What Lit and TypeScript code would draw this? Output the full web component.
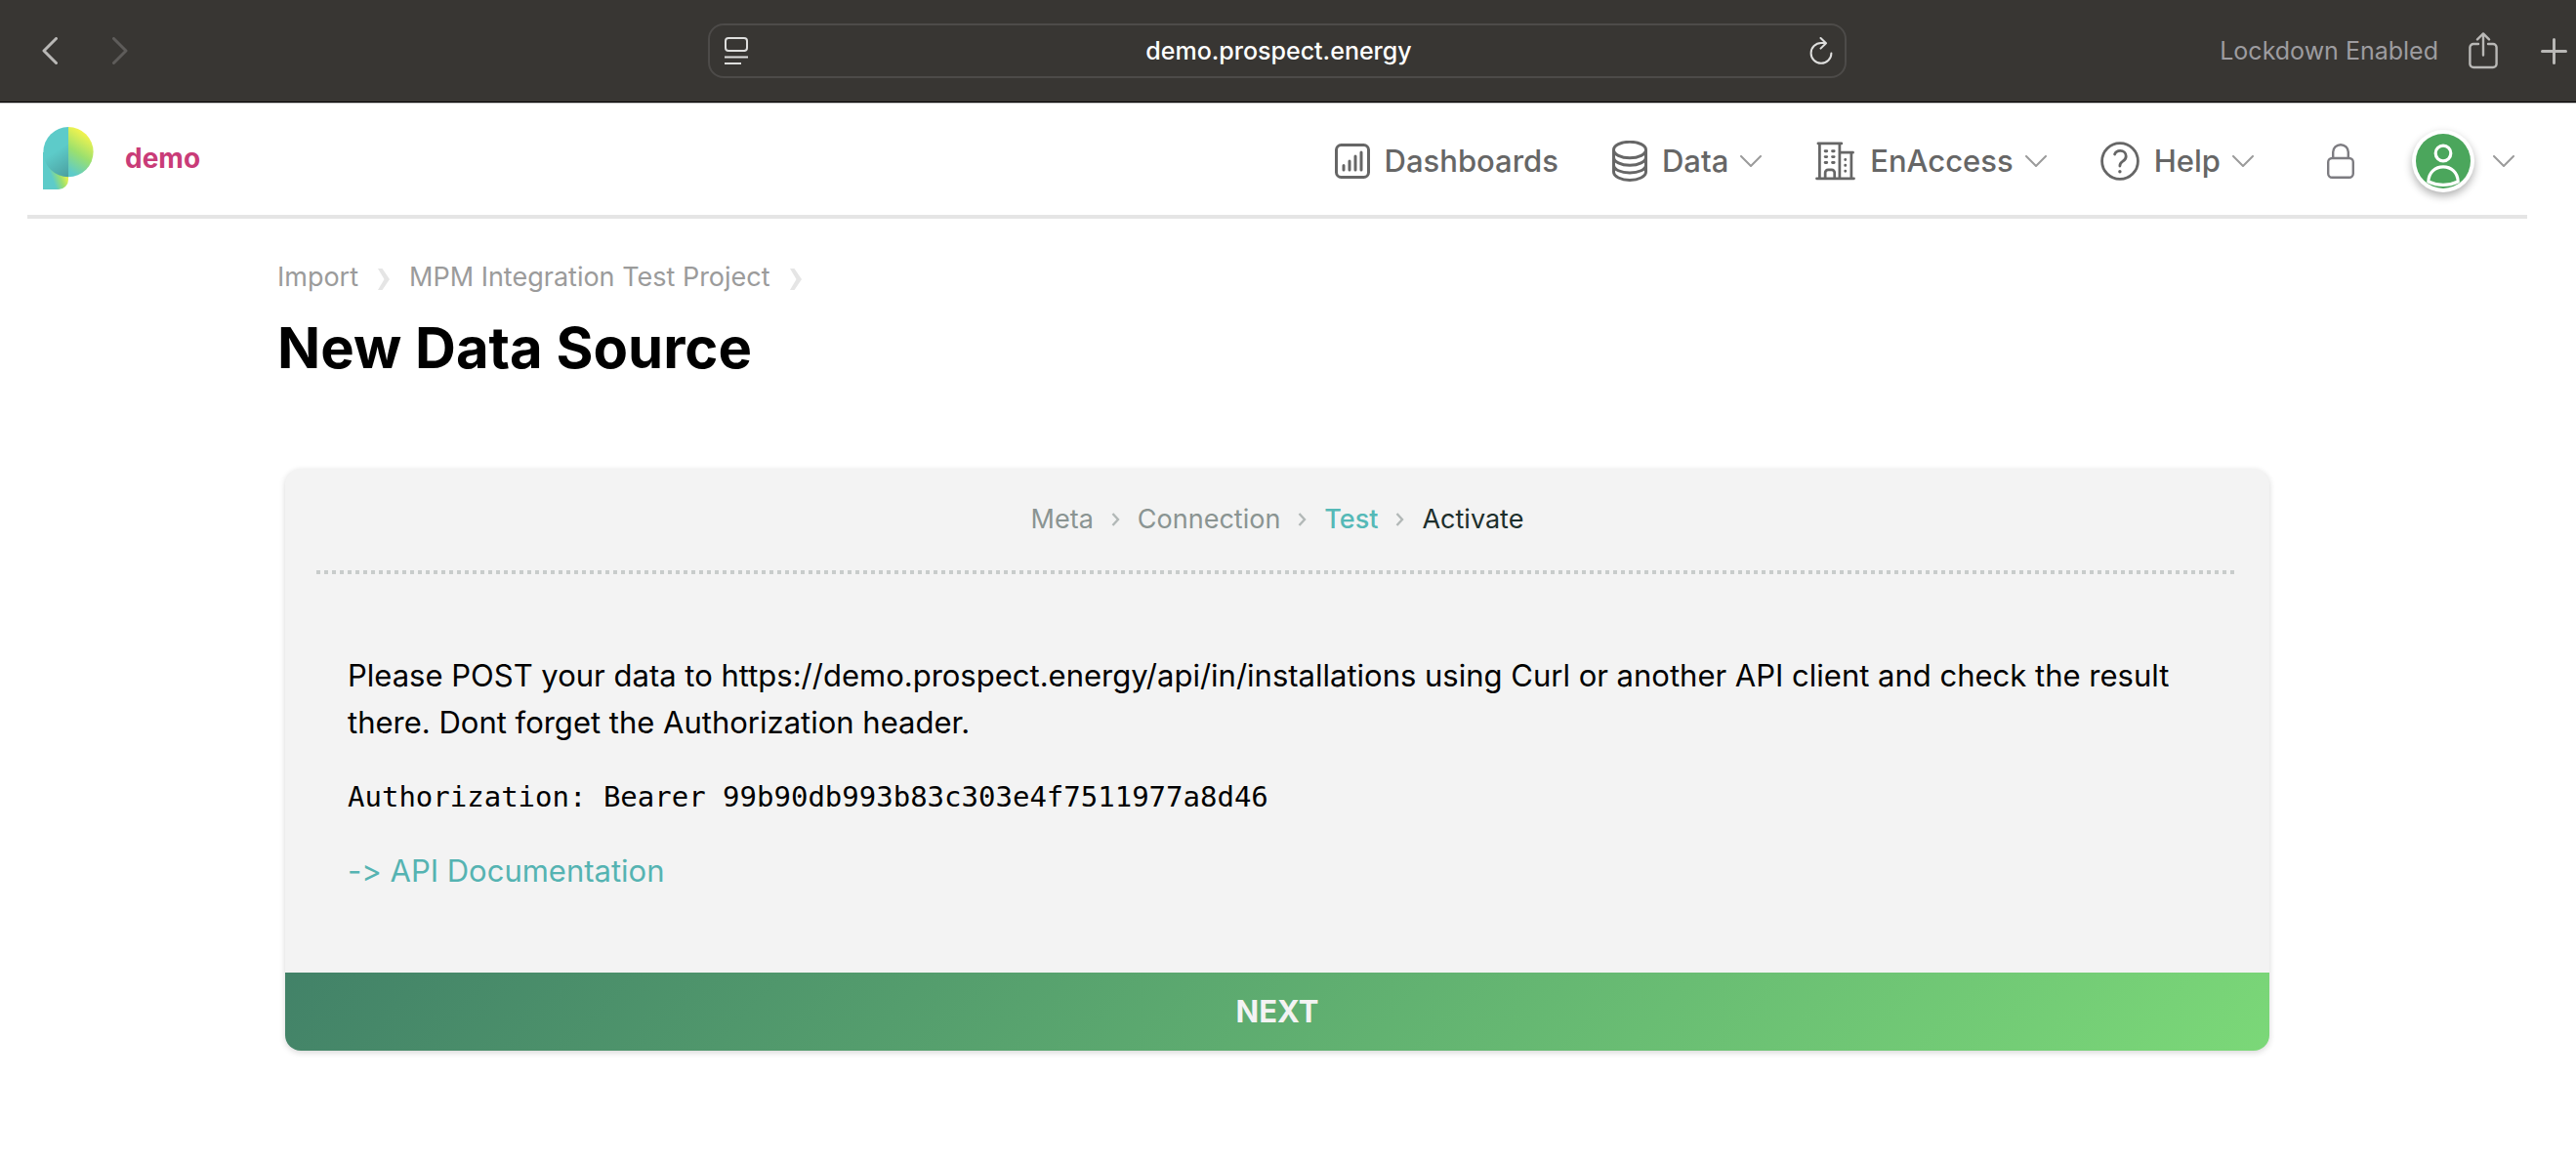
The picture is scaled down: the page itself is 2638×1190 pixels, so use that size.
import { LitElement, html, css, svg } from "lit";
import { customElement, property } from "lit/decorators.js";

const chevron = html`<svg class="chevron" width="22" height="12" viewBox="0 0 22 12" aria-hidden="true">
  <path d="M1 1 11 11 21 1" fill="none" stroke="#9b9b9b" stroke-width="2" stroke-linejoin="round" stroke-linecap="round" />
</svg>`;

const glyphs: Record<string, unknown> = {
  dashboards: html`<svg width="36" height="36" viewBox="0 0 36 36" fill="none" stroke="#666" stroke-width="3" stroke-linecap="round" aria-hidden="true">
    ${svg`<rect x="1.5" y="1.5" width="33" height="33" rx="5" />
    <path d="M9 22.5V27M15 18V27M21 13V27M27 9V27" />`}
  </svg>`,
  data: html`<svg width="36" height="42" viewBox="0 0 36 42" fill="none" stroke="#666" stroke-width="3" aria-hidden="true">
    ${svg`<ellipse cx="18" cy="9.5" rx="16.5" ry="8.2" />
    <path d="M1.5 9.5V32C1.5 36.7 9 40.5 18 40.5S34.5 36.7 34.5 32V9.5" />
    <path d="M1.5 17C1.5 21.7 9 25.3 18 25.3S34.5 21.7 34.5 17" />
    <path d="M1.5 25C1.5 29.7 9 33 18 33S34.5 29.7 34.5 25" />`}
  </svg>`,
  building: html`<svg width="41" height="40" viewBox="0 0 42 40" fill="none" stroke="#666" stroke-width="2.8" stroke-linecap="round" aria-hidden="true">
    ${svg`<path d="M3 1.5H27.5M4.5 1.5V38M25.5 1.5V38M1.5 38.2H40.5M25.5 11H39.5M37.8 11V38" />
    <path d="M10.4 38V32A3 3 0 0 1 13.4 29H17.2A3 3 0 0 1 20.2 32V38" />
    <path d="M10.4 9.5H12M18 9.5H19.6M10.4 15.5H12M18 15.5H19.6M10.4 21.5H12M18 21.5H19.6M31.5 18.4V18.5M31.5 24.4V24.5M31.5 30.4V30.5" stroke-width="3" />`}
  </svg>`,
  help: html`<svg width="40" height="40" viewBox="0 0 40 40" fill="none" stroke="#666" stroke-width="2.8" stroke-linecap="round" aria-hidden="true">
    ${svg`<circle cx="20" cy="20" r="18.4" />
    <path d="M14.6 13C15.5 10.6 17.6 9.4 20.2 9.4C23.7 9.4 26.2 11.8 26.2 15C26.2 17.8 24.6 19.2 22.6 20.4C20.6 21.7 19.9 22.8 19.9 25" />
    <path d="M19.9 30.7V30.8" stroke-width="3.4" />`}
  </svg>`,
};

@customElement("browser-toolbar")
export class BrowserToolbar extends LitElement {
  static styles = css`
    :host {
      display: grid;
      grid-template-columns: 725fr 1166fr 747fr;
      align-items: center;
      height: 104px;
      background: #383633;
      border-bottom: 1px solid #000;
      box-shadow: 0 1px 0 #bdbdbd;
      margin-bottom: 1px;
      font-family: Inter, "Liberation Sans", sans-serif;
      font-size: 25px;
      line-height: 32px;
    }
    button {
      display: block;
      background: none;
      border: 0;
      padding: 0;
      font: inherit;
      color: inherit;
    }
    svg {
      display: block;
    }
    .history {
      display: flex;
      gap: 56px;
      padding-left: 43px;
    }
    .address {
      display: flex;
      align-items: center;
      box-sizing: border-box;
      height: 56px;
      padding: 0 12px 0 15px;
      border: 2px solid #4d4b49;
      border-radius: 16px;
    }
    .url {
      flex: 1;
      min-width: 0;
      background: none;
      border: 0;
      padding: 0;
      font: inherit;
      font-weight: 500;
      color: #fff;
      text-align: center;
    }
    .actions {
      display: flex;
      align-items: center;
      justify-content: flex-end;
      padding-right: 9px;
    }
    .lockdown {
      color: #9d9ca0;
      margin-right: 31px;
    }
    .share {
      margin-right: 44px;
    }
  `;

  render() {
    return html`
      <div class="history">
        <button aria-label="Back">
          <svg width="16" height="28" viewBox="0 0 16 28" fill="none" stroke="#b9b8b6" stroke-width="3" stroke-linecap="round" stroke-linejoin="round">
            <path d="M14.5 1.5 2 14 14.5 26.5" />
          </svg>
        </button>
        <button aria-label="Forward" disabled>
          <svg width="16" height="28" viewBox="0 0 16 28" fill="none" stroke="#5e5c5a" stroke-width="3" stroke-linecap="round" stroke-linejoin="round">
            <path d="M1.5 1.5 14 14 1.5 26.5" />
          </svg>
        </button>
      </div>
      <div class="address">
        <button aria-label="Page menu">
          <svg width="24" height="28" viewBox="0 0 24 28" fill="none" stroke="#dededd" stroke-width="2">
            <rect x="1" y="1" width="22" height="13" rx="3" />
            <path d="M0 20.5H24M0 27H17" />
          </svg>
        </button>
        <input class="url" type="text" aria-label="Address" .value=${"demo.prospect.energy"} />
        <button aria-label="Reload">
          <svg width="24" height="28" viewBox="0 0 24 28" fill="none" stroke="#dededd" stroke-width="2" stroke-linecap="round" stroke-linejoin="round">
            <path d="M12 6A10.4 10.4 0 1 0 22.4 16.4M12 6H16.5M11.5 1 17 6.2 11.5 11.6" />
          </svg>
        </button>
      </div>
      <div class="actions">
        <span class="lockdown">Lockdown Enabled</span>
        <button class="share" aria-label="Share">
          <svg width="30" height="38" viewBox="0 0 30 38" fill="none" stroke="#b9b8b6" stroke-width="2.4" stroke-linecap="round" stroke-linejoin="round">
            <path d="M10 12H5A3.6 3.6 0 0 0 1.4 15.6V32.4A3.6 3.6 0 0 0 5 36H25A3.6 3.6 0 0 0 28.6 32.4V15.6A3.6 3.6 0 0 0 25 12H20M15 23.5V1.6M9 7.4 15 1.4 21 7.4" />
          </svg>
        </button>
        <button aria-label="New tab">
          <svg width="27" height="27" viewBox="0 0 27 27" fill="none" stroke="#b9b8b6" stroke-width="3" stroke-linecap="round">
            <path d="M13.5 1.5V25.5M1.5 13.5H25.5" />
          </svg>
        </button>
      </div>
    `;
  }
}

@customElement("site-header")
export class SiteHeader extends LitElement {
  static styles = css`
    :host {
      display: flex;
      justify-content: space-between;
      align-items: center;
      height: 114px;
      margin: 0 28px;
      border-bottom: 4px solid #e5e5e5;
      font-family: Inter, "Liberation Sans", sans-serif;
    }
    svg {
      display: block;
      flex: none;
    }
    .brand {
      display: flex;
      align-items: center;
      gap: 32px;
      padding: 0 0 2px 16px;
      color: #c93c78;
      font-size: 28px;
      font-weight: 700;
      line-height: 40px;
      text-decoration: none;
    }
    .nav {
      display: flex;
      align-items: center;
      gap: 55px;
      padding: 4px 13px 0 0;
    }
    .item {
      display: flex;
      align-items: center;
      background: none;
      border: 0;
      padding: 0;
      color: #666;
      font: 500 31px/40px Inter, "Liberation Sans", sans-serif;
      text-decoration: none;
      white-space: nowrap;
    }
    .label {
      margin-left: 15px;
    }
    .label + .chevron {
      margin-left: 12px;
    }
    .lock {
      margin-left: 20px;
    }
    .account {
      gap: 19px;
      margin-left: 4px;
    }
    .avatar {
      border-radius: 50%;
      background: #fff;
      box-shadow: 0 4px 8px rgba(0, 0, 0, 0.3);
    }
  `;

  private menu(icon: string, label: string) {
    return html`<button class="item" aria-haspopup="true">${glyphs[icon]}<span class="label">${label}</span>${chevron}</button>`;
  }

  render() {
    return html`
      <a class="brand" href="#home">
        <svg width="52" height="64" viewBox="0 0 52 64" aria-hidden="true">
          <defs>
            <linearGradient id="leaf" x1="50" y1="6" x2="22" y2="48" gradientUnits="userSpaceOnUse">
              <stop offset="0.1" stop-color="#eff24f" />
              <stop offset="0.5" stop-color="#9be06e" />
              <stop offset="0.9" stop-color="#5dcbc9" />
            </linearGradient>
            <linearGradient id="shade" x1="8" y1="16" x2="30" y2="50" gradientUnits="userSpaceOnUse">
              <stop offset="0.25" stop-color="#5dcbc9" />
              <stop offset="1" stop-color="#4a9d9d" />
            </linearGradient>
            <linearGradient id="stem" x1="4" y1="60" x2="28" y2="51" gradientUnits="userSpaceOnUse">
              <stop offset="0.3" stop-color="#5dcbc9" />
              <stop offset="0.62" stop-color="#9be06e" />
              <stop offset="0.92" stop-color="#eff24f" />
            </linearGradient>
          </defs>
          <path d="M0 26H26V54A10 10 0 0 1 16 64H0Z" fill="url(#stem)" />
          <path d="M26 0A25.6 25.6 0 0 1 26 51.2Z" fill="url(#leaf)" />
          <path d="M26 0A25.6 25.6 0 0 0 26 51.2Z" fill="url(#shade)" />
        </svg>
        <span>demo</span>
      </a>
      <nav class="nav" aria-label="Main">
        <a class="item" href="#dashboards">${glyphs.dashboards}<span class="label">Dashboards</span></a>
        ${this.menu("data", "Data")} ${this.menu("building", "EnAccess")} ${this.menu("help", "Help")}
        <button class="item lock" aria-label="Lock">
          <svg width="28" height="36" viewBox="0 0 28 36" fill="none" stroke="#7d7c81" stroke-width="2.4">
            <rect x="1.2" y="15" width="25.6" height="19.8" rx="4" />
            <path d="M6.2 15V8.7A7.8 7.5 0 0 1 21.8 8.7V15" />
          </svg>
        </button>
        <button class="item account" aria-label="Account">
          <svg class="avatar" width="64" height="64" viewBox="0 0 64 64" fill="none" stroke="#fff" stroke-width="3.2" stroke-linejoin="round">
            <circle cx="32" cy="32" r="28" fill="#4ba65c" stroke="none" />
            <circle cx="32" cy="24" r="7.8" />
            <path d="M16.8 53C17 43.5 24 37.8 32 37.8S47 43.5 47.2 53Q40 56.4 32 56.4T16.8 53Z" />
          </svg>
          ${chevron}
        </button>
      </nav>
    `;
  }
}

@customElement("step-trail")
export class StepTrail extends LitElement {
  @property({ attribute: false }) steps: { label: string; state: string }[] = [];

  static styles = css`
    :host {
      display: block;
    }
    .steps {
      display: flex;
      justify-content: center;
      gap: 18px;
      margin: 0;
      padding: 0;
      list-style: none;
    }
    .step {
      display: flex;
      align-items: center;
      gap: 18px;
      color: #8a9492;
    }
    .current {
      color: #55b9b7;
      font-weight: 500;
    }
    .next {
      color: #1d2f2c;
    }
  `;

  render() {
    return html`<ol class="steps">
      ${this.steps.map(
        (step, i) => html`<li class="step ${step.state}" aria-current=${step.state === "current" ? "step" : "false"}>
          ${i > 0
            ? html`<svg width="9" height="14" viewBox="0 0 9 14" aria-hidden="true">
                <path d="M1.5 1 7 7 1.5 13" fill="none" stroke="#b2b8b7" stroke-width="2.4" />
              </svg>`
            : null}
          <span>${step.label}</span>
        </li>`,
      )}
    </ol>`;
  }
}

@customElement("app-root")
export class AppRoot extends LitElement {
  private steps = [
    { label: "Meta", state: "done" },
    { label: "Connection", state: "done" },
    { label: "Test", state: "current" },
    { label: "Activate", state: "next" },
  ];

  static styles = css`
    :host {
      display: block;
      min-height: 100vh;
      background: #fff;
      color: #000;
      font-family: Inter, "Liberation Sans", sans-serif;
    }
    .page {
      padding-right: 22px;
    }
    .content {
      max-width: 2048px;
      margin: 0 auto;
      padding: 40px 0;
    }
    .crumbs {
      display: flex;
      align-items: center;
      gap: 20px;
      font-size: 27px;
      line-height: 40px;
    }
    .crumb {
      color: #9b9b9b;
      text-decoration: none;
    }
    .title {
      margin: 16px 0 88px;
      font-size: 58px;
      font-weight: 700;
      line-height: 72px;
    }
    .card {
      margin: 0 8px;
      border-radius: 16px;
      background: #f3f3f3;
      box-shadow: 0 2px 6px rgba(0, 0, 0, 0.16);
      overflow: hidden;
    }
    .trail {
      padding: 32px 0;
      font-size: 27px;
      line-height: 40px;
    }
    .divider {
      height: 4px;
      margin: 0 32px;
      background: repeating-linear-gradient(90deg, #c8cccb 0 4px, transparent 4px 8px);
    }
    .body {
      display: flex;
      flex-direction: column;
      align-items: flex-start;
      gap: 28px;
      padding: 80px 64px;
      font-size: 31px;
      line-height: 48px;
      font-variant-ligatures: none;
    }
    .text {
      margin: 0;
    }
    .token {
      font-family: "DejaVu Sans Mono", "Liberation Mono", monospace;
      font-size: 29px;
    }
    .docs {
      color: #55b3b2;
      text-decoration: none;
    }
    .submit {
      display: block;
      width: 100%;
      height: 80px;
      border: 0;
      padding: 0;
      background: linear-gradient(135deg, #428268, #7bd878);
      color: #f3f3f3;
      font: 700 31px/40px Inter, "Liberation Sans", sans-serif;
    }
  `;

  render() {
    const mark = html`<svg width="12" height="26" viewBox="0 -4 12 26" aria-hidden="true">
      <path d="M0 0H4.5L12 11 4.5 22H0L6.5 11Z" fill="#e5e5e5" />
    </svg>`;
    return html`
      <browser-toolbar></browser-toolbar>
      <div class="page">
        <site-header></site-header>
        <main class="content">
          <nav class="crumbs" aria-label="Breadcrumb">
            <a class="crumb" href="#import">Import</a>
            ${mark}
            <a class="crumb" href="#project">MPM Integration Test Project</a>
            ${mark}
          </nav>
          <h1 class="title">New Data Source</h1>
          <section class="card">
            <step-trail class="trail" .steps=${this.steps}></step-trail>
            <div class="divider"></div>
            <div class="body">
              <p class="text">
                Please POST your data to https://demo.prospect.energy/api/in/installations using Curl or another API
                client and check the result there. Dont forget the Authorization header.
              </p>
              <code class="token">Authorization: Bearer 99b90db993b83c303e4f7511977a8d46</code>
              <a class="docs" href="#docs">-&gt; API Documentation</a>
            </div>
            <button class="submit">NEXT</button>
          </section>
        </main>
      </div>
    `;
  }
}
